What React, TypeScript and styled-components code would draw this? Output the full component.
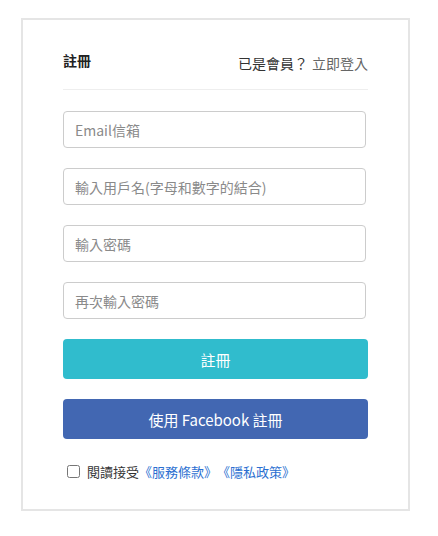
import React from "react";
import styled, { createGlobalStyle } from "styled-components";

const Global = createGlobalStyle`
  html, body { margin: 0; padding: 0; background: #fff; }
  body { font-family: "Noto Sans CJK TC", "Noto Sans", sans-serif; color: #333; }
  * { box-sizing: border-box; }
`;

const Page = styled.div`
  padding: 18px 0 0 21px;
`;

const Card = styled.div`
  width: 389px;
  height: 493px;
  border: 2px solid #e5e5e5;
  padding: 30px 40px 0 40px;
  display: flex;
  flex-direction: column;
`;

const Header = styled.div`
  display: flex;
  justify-content: space-between;
  align-items: flex-end;
  height: 40px;
  padding-bottom: 16px;
  border-bottom: 1px solid #eeeeee;
`;

const Title = styled.h2`
  margin: 0;
  font-size: 14px;
  font-weight: 700;
  line-height: 20px;
  color: #222;
  position: relative;
  top: -3px;
`;

const Member = styled.div`
  font-size: 14px;
  line-height: 20px;
  color: #333;
`;

const LoginLink = styled.a`
  color: #666;
  text-decoration: none;
  margin-left: 4px;
`;

const Form = styled.form`
  display: flex;
  flex-direction: column;
  margin-top: 21px;
`;

const Input = styled.input`
  width: 303px;
  height: 37px;
  border: 1px solid #cccccc;
  border-radius: 4px;
  padding: 0 11px;
  font-family: inherit;
  font-size: 14px;
  margin-bottom: 20px;
  outline: none;
  &::placeholder { color: #8a8a8a; }
`;

const Button = styled.button<{ $bg: string }>`
  width: 305px;
  height: 40px;
  border: none;
  border-radius: 4px;
  background: ${(p) => p.$bg};
  color: #fff;
  font-family: inherit;
  font-size: 15px;
  margin-bottom: 20px;
  cursor: pointer;
`;

const Agree = styled.label`
  display: flex;
  align-items: center;
  font-size: 13px;
  color: #333;
  margin-top: 3px;
  padding-left: 4px;
`;

const Check = styled.input`
  width: 13px;
  height: 13px;
  margin: 0 7px 0 0;
  accent-color: #888;
`;

const Terms = styled.a`
  color: #2b6fd1;
  text-decoration: none;
`;

export default function App() {
  return (
    <Page>
      <Global />
      <Card>
        <Header>
          <Title>註冊</Title>
          <Member>
            已是會員？<LoginLink href="#">立即登入</LoginLink>
          </Member>
        </Header>
        <Form onSubmit={(e) => e.preventDefault()}>
          <Input placeholder="Email信箱" />
          <Input placeholder="輸入用戶名(字母和數字的結合)" />
          <Input type="password" placeholder="輸入密碼" />
          <Input type="password" placeholder="再次輸入密碼" />
          <Button $bg="#30bccd" type="submit">註冊</Button>
          <Button $bg="#4267b2" type="button">使用 Facebook 註冊</Button>
          <Agree>
            <Check type="checkbox" />
            閱讀接受<Terms href="#">《服務條款》</Terms>
            <Terms href="#">《隱私政策》</Terms>
          </Agree>
        </Form>
      </Card>
    </Page>
  );
}
